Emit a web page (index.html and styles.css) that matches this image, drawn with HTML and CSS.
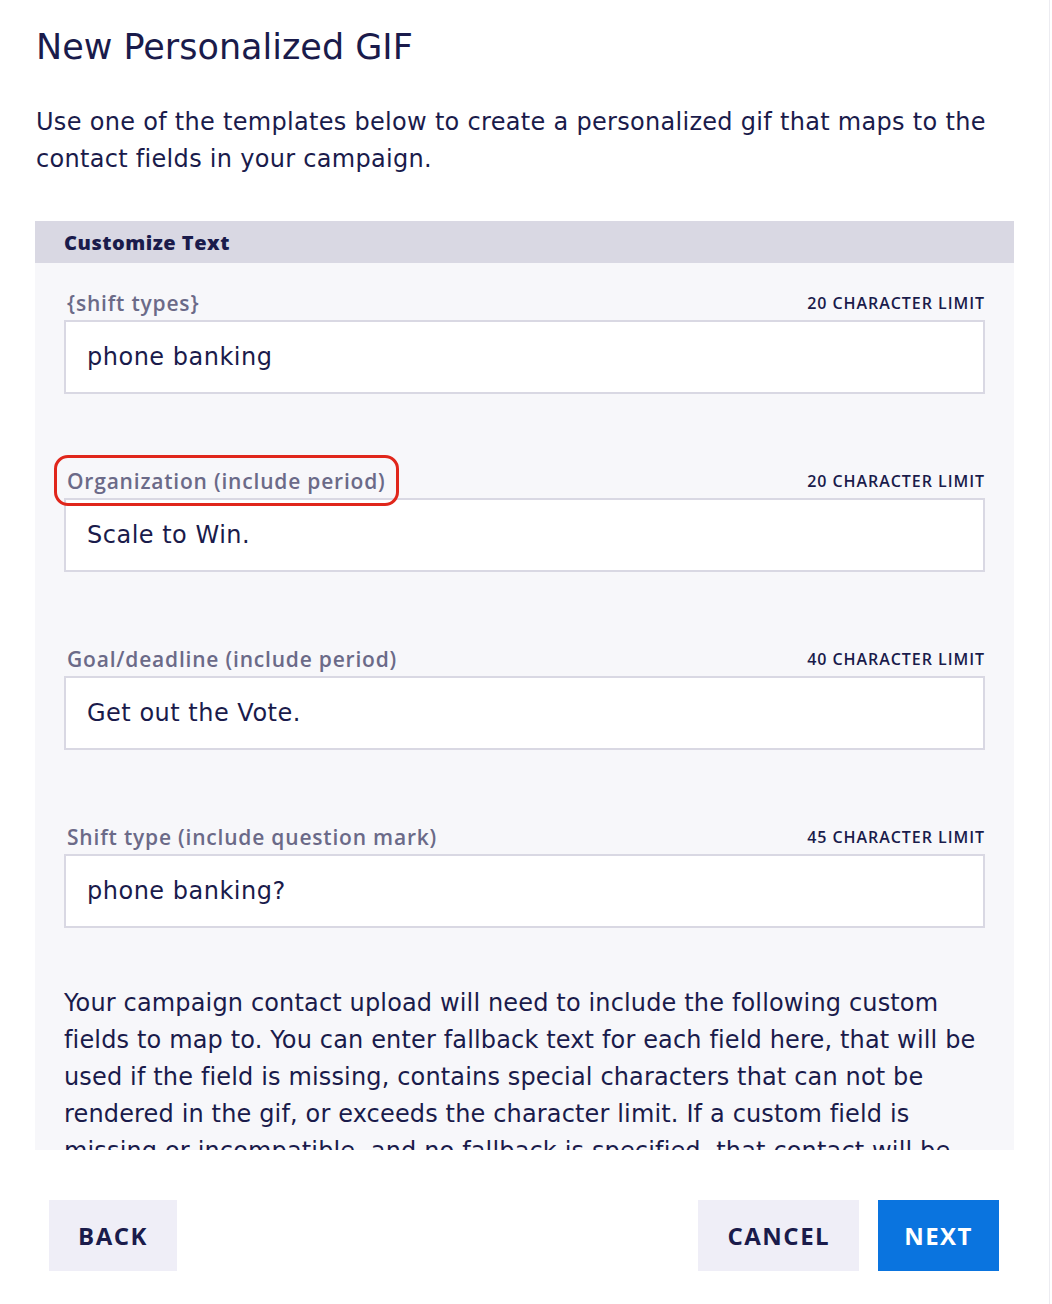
FILE: index.html
```html
<!DOCTYPE html>
<html lang="en">
<head>
<meta charset="utf-8">
<title>New Personalized GIF</title>
<link rel="stylesheet" href="styles.css">
</head>
<body>
<div class="page">
  <h1 class="title">New Personalized GIF</h1>
  <p class="intro">Use one of the templates below to create a personalized gif that maps to the contact fields in your campaign.</p>

  <section class="panel">
    <div class="panel-header">Customize Text</div>
    <div class="panel-body">
      <div class="field">
        <div class="field-head">
          <span class="field-label">{shift types}</span>
          <span class="field-limit">20 CHARACTER LIMIT</span>
        </div>
        <div class="field-input">phone banking</div>
      </div>

      <div class="field">
        <div class="field-head">
          <span class="field-label marked">Organization (include period)<span class="mark"></span></span>
          <span class="field-limit">20 CHARACTER LIMIT</span>
        </div>
        <div class="field-input">Scale to Win.</div>
      </div>

      <div class="field">
        <div class="field-head">
          <span class="field-label">Goal/deadline (include period)</span>
          <span class="field-limit">40 CHARACTER LIMIT</span>
        </div>
        <div class="field-input">Get out the Vote.</div>
      </div>

      <div class="field">
        <div class="field-head">
          <span class="field-label">Shift type (include question mark)</span>
          <span class="field-limit">45 CHARACTER LIMIT</span>
        </div>
        <div class="field-input">phone banking?</div>
      </div>

      <p class="note">Your campaign contact upload will need to include the following custom fields to map to. You can enter fallback text for each field here, that will be used if the field is missing, contains special characters that can not be rendered in the gif, or exceeds the character limit. If a custom field is missing or incompatible, and no fallback is specified, that contact will be skipped when the campaign is sent.</p>
    </div>
  </section>

  <div class="actions">
    <button class="btn btn-secondary">BACK</button>
    <div class="actions-right">
      <button class="btn btn-secondary">CANCEL</button>
      <button class="btn btn-primary">NEXT</button>
    </div>
  </div>
</div>
</body>
</html>
```

FILE: styles.css
```css
html, body {
  margin: 0;
  padding: 0;
  background: #ffffff;
}

body {
  font-family: "DejaVu Sans", "Open Sans", sans-serif;
  color: #1a1b4b;
}

.page {
  width: 1050px;
  min-height: 1304px;
  box-sizing: border-box;
  border-right: 1px solid #ececf1;
  padding: 24px 0 0 36px;
}

.title {
  margin: 0;
  font-size: 35px;
  line-height: 46px;
  font-weight: 400;
  color: #1a1b4b;
}

.intro {
  margin: 34px 0 0 0;
  width: 960px;
  font-size: 24px;
  line-height: 37px;
  letter-spacing: 0.3px;
  color: #1a1b4b;
}

.panel {
  margin-top: 43px;
  margin-left: -1px;
  width: 979px;
  background: #f7f7fa;
}

.panel-header {
  height: 42px;
  display: flex;
  align-items: center;
  padding-left: 29px;
  background: #d9d8e3;
  font-family: "Open Sans", sans-serif;
  font-size: 20px;
  font-weight: 800;
  letter-spacing: 0.5px;
  color: #1a1b4b;
}

.panel-body {
  height: 887px;
  overflow: hidden;
  box-sizing: border-box;
  padding: 23px 29px 0 29px;
}

.field {
  margin-bottom: 70px;
}

.field-head {
  height: 34px;
  display: flex;
  justify-content: space-between;
  align-items: center;
}

.field-label {
  position: relative;
  padding-left: 3px;
  font-family: "Open Sans", sans-serif;
  font-size: 21px;
  font-weight: 600;
  letter-spacing: 0.8px;
  color: #6b6a88;
}

.mark {
  position: absolute;
  left: -10px;
  right: -13px;
  top: -12px;
  bottom: -11px;
  border: 3px solid #e0261b;
  border-radius: 14px;
}

.field-limit {
  font-family: "Open Sans", sans-serif;
  font-size: 16px;
  font-weight: 600;
  color: #1a1b4b;
  letter-spacing: 0.95px;
}

.field-input {
  height: 74px;
  box-sizing: border-box;
  border: 2px solid #d9d8e3;
  background: #ffffff;
  padding-left: 21px;
  display: flex;
  align-items: center;
  font-size: 24px;
  letter-spacing: 0.5px;
  color: #1a1b4b;
}

.field:last-of-type {
  margin-bottom: 0;
}

.note {
  margin: 57px 0 0 0;
  font-size: 24px;
  line-height: 37px;
  letter-spacing: 0.15px;
  color: #1a1b4b;
}

.actions {
  display: flex;
  justify-content: space-between;
  width: 979px;
  box-sizing: border-box;
  margin-left: -1px;
  padding: 50px 15px 0 14px;
}

.actions-right {
  display: flex;
  gap: 19px;
}

.btn {
  height: 71px;
  border: none;
  padding: 0 29px;
  font-family: "Open Sans", "Liberation Sans", sans-serif;
  font-size: 24px;
  font-weight: 700;
  letter-spacing: 1.5px;
  cursor: pointer;
}

.btn-secondary {
  background: #efeef7;
  color: #1a1b4b;
}

.btn-primary {
  padding: 0 26px;
  background: #0a74df;
  color: #ffffff;
}
```
